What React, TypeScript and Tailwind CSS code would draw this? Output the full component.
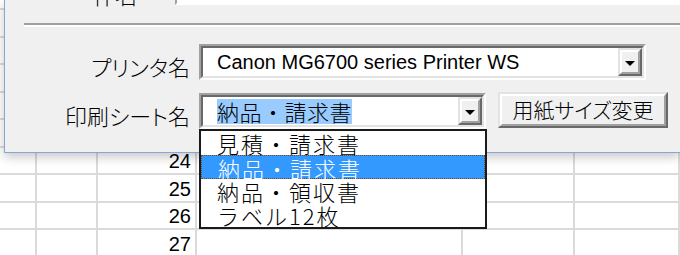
import { ReactNode } from 'react';

const jp = "font-['Noto_Sans_CJK_JP',sans-serif] font-light";

const rowHeights = [10, 28, 27, 28, 27, 28, 27, 28, 27, 28];
const colWidths = [37, 61, 99, 266, 112, 105];
const cellValues: Record<number, string> = { 6: '24', 7: '25', 8: '26', 9: '27' };

function Sheet() {
    return (
        <div className="flex flex-col">
            {rowHeights.map((h, r) => (
                <div key={r} className="flex" style={{ height: h }}>
                    {colWidths.map((w, c) => (
                        <div
                            key={c}
                            className="flex items-end justify-end border-b-2 border-r-2 border-[#dadada] pr-[4px] pb-[1px] font-['Liberation_Sans',sans-serif] text-[20px] leading-[22px] text-black"
                            style={{ width: w }}
                        >
                            {c === 2 ? cellValues[r] : null}
                        </div>
                    ))}
                </div>
            ))}
        </div>
    );
}

function DropArrowButton() {
    return (
        <div className="border-2 border-t-[#e3e3e3] border-l-[#e3e3e3] border-r-[#696969] border-b-[#696969]">
            <div className="flex h-[24px] w-[20px] items-center justify-center border-2 border-t-white border-l-white border-r-[#a0a0a0] border-b-[#a0a0a0] bg-[#f0f0f0]">
                <svg width="10" height="5" viewBox="0 0 10 5" className="mt-[3px]">
                    <polygon points="0,0 10,0 5,5" fill="#000" />
                </svg>
            </div>
        </div>
    );
}

function Combo({ width, children }: { width: number; children: ReactNode }) {
    return (
        <div
            className="h-[36px] border-2 border-t-[#a0a0a0] border-l-[#a0a0a0] border-r-white border-b-white"
            style={{ width }}
        >
            <div className="flex h-full border-2 border-t-[#696969] border-l-[#696969] border-r-[#e3e3e3] border-b-[#e3e3e3] bg-white">
                <div className="flex flex-1 items-center pl-[14px] whitespace-nowrap">
                    {children}
                </div>
                <DropArrowButton />
            </div>
        </div>
    );
}

function Label({ children }: { children: ReactNode }) {
    return (
        <div
            className={`${jp} w-[185px] pt-[8px] text-right text-[22px] leading-[28px] text-black [font-feature-settings:'palt']`}
        >
            {children}
        </div>
    );
}

const sheetNames = ['見積・請求書', '納品・請求書', '納品・領収書', 'ラベル12枚'];

function Dialog() {
    return (
        <div className="absolute top-0 left-[4px] h-[153px] w-[676px] border-b border-l border-[#86a7d6] bg-[#f0f0f0] shadow-[0_4px_10px_rgba(0,0,0,0.22)]">
            <div className="mt-[-31px] flex h-[36px]">
                <div
                    className={`${jp} w-[132px] self-end text-right text-[22px] leading-[22px] text-black [font-feature-settings:'palt']`}
                >
                    件名
                </div>
                <div className="ml-[38px] flex-1 border-b-2 border-l-2 border-b-white border-l-[#a0a0a0] bg-white" />
            </div>

            <div className="mt-[18px] ml-[19px] h-[4px] border-t-2 border-b-2 border-t-[#a0a0a0] border-b-white" />

            <div className="mt-[17px] flex">
                <Label>プリンタ名</Label>
                <div className="ml-[9px]">
                    <Combo width={447}>
                        <span className="font-['Liberation_Sans','Noto_Sans_CJK_JP',sans-serif] text-[20px] leading-[24px] text-black">
                            Canon MG6700 series Printer WS
                        </span>
                    </Combo>
                </div>
            </div>

            <div className="mt-[13px] flex">
                <Label>印刷シート名</Label>
                <div className="ml-[9px]">
                    <Combo width={287}>
                        <span
                            className={`${jp} bg-[#99cbff] text-[22px] leading-[25px] tracking-[0.5px] text-black`}
                        >
                            納品・請求書
                        </span>
                    </Combo>
                </div>
                <button className="mt-[-1px] ml-[12px] h-[36px] w-[170px] border-2 border-t-[#e3e3e3] border-l-[#e3e3e3] border-r-[#696969] border-b-[#696969]">
                    <div
                        className={`${jp} flex h-full items-center justify-center border-2 border-t-white border-l-white border-r-[#a0a0a0] border-b-[#a0a0a0] bg-[#f0f0f0] text-[21px] text-black [font-feature-settings:'palt']`}
                    >
                        用紙サイズ変更
                    </div>
                </button>
            </div>
        </div>
    );
}

function SheetList() {
    return (
        <div className="absolute top-[129px] left-[199px] w-[288px] border-2 border-[#1a1a1a] bg-white">
            {sheetNames.map((name, i) => (
                <div
                    key={name}
                    className={`${jp} h-[24px] pl-[16px] text-[22px] leading-[24px] tracking-[2px] whitespace-nowrap ${
                        i === 1
                            ? 'border border-dotted border-[#7a4a10] bg-[#3399ff] pl-[15px] leading-[22px] text-white'
                            : 'text-black'
                    }`}
                >
                    {name}
                </div>
            ))}
        </div>
    );
}

export default function App() {
    return (
        <div className="relative h-[255px] w-[680px] overflow-hidden bg-white">
            <Sheet />
            <Dialog />
            <SheetList />
        </div>
    );
}
